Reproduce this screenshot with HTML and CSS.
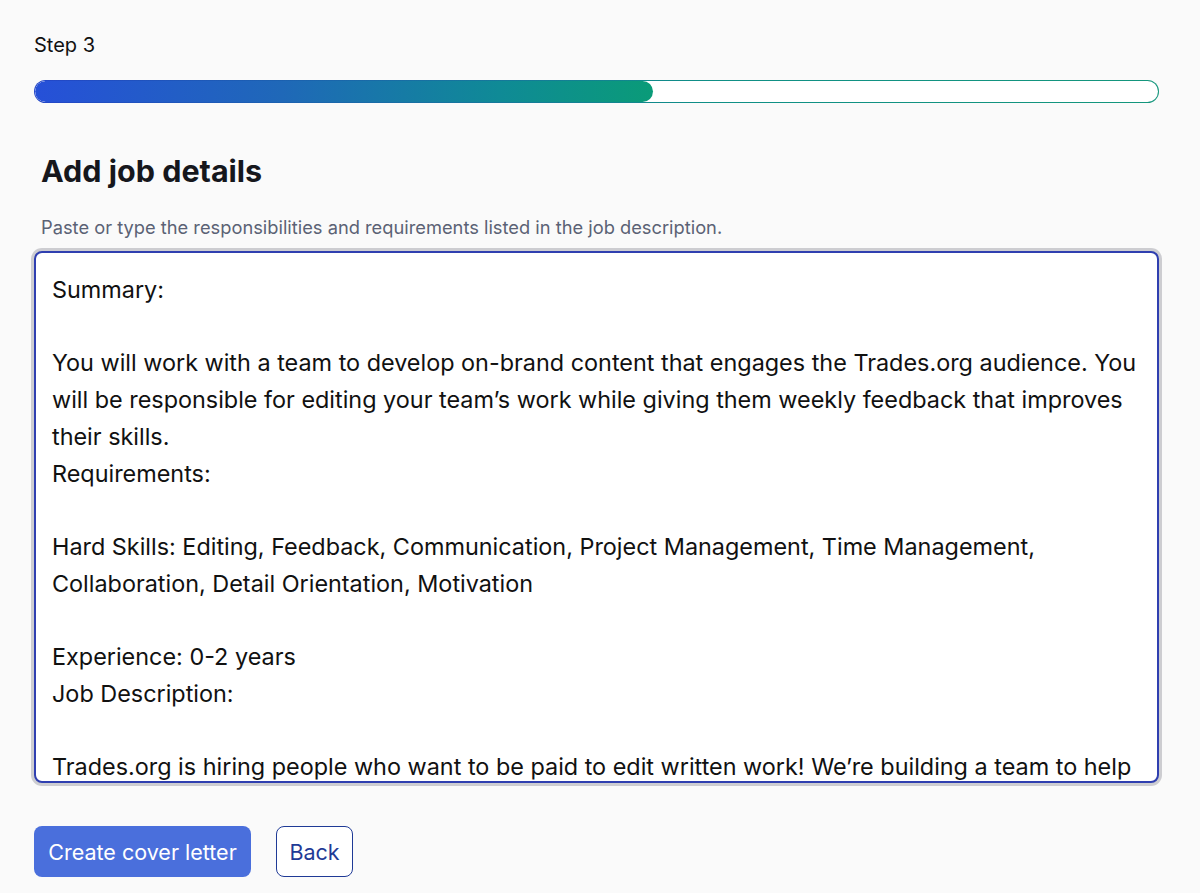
FILE: index.html
```html
<!DOCTYPE html>
<html lang="en">
<head>
<meta charset="utf-8">
<title>Add job details</title>
<link rel="stylesheet" href="styles.css">
</head>
<body>
<main class="page">
  <div class="step">Step 3</div>
  <div class="progress"><div class="progress-fill" style="width:55%"></div></div>
  <h1 class="title">Add job details</h1>
  <label class="hint" for="job">Paste or type the responsibilities and requirements listed in the job description.</label>
  <textarea id="job" class="job-input">Summary:

You will work with a team to develop on-brand content that engages the Trades.org audience. You will be responsible for editing your team’s work while giving them weekly feedback that improves their skills.
Requirements:

Hard Skills: Editing, Feedback, Communication, Project Management, Time Management, Collaboration, Detail Orientation, Motivation

Experience: 0-2 years
Job Description:

Trades.org is hiring people who want to be paid to edit written work! We’re building a team to help our writers produce their best work.</textarea>
  <div class="actions">
    <button class="btn btn-primary">Create cover letter</button>
    <button class="btn btn-secondary">Back</button>
  </div>
</main>
</body>
</html>
```

FILE: styles.css
```css
html, body {
  margin: 0;
  padding: 0;
  background: #fafafa;
}
body {
  font-family: Inter, "Noto Sans", sans-serif;
  color: #111;
}
.page {
  width: 1125px;
  padding: 33px 0 0 34px;
  display: flex;
  flex-direction: column;
}
.step {
  font-size: 20px;
  line-height: 24px;
  color: #111;
}
.progress {
  margin-top: 23px;
  height: 23px;
  box-sizing: border-box;
  border-radius: 12px;
  border: 1.5px solid transparent;
  background:
    linear-gradient(#ffffff, #ffffff) padding-box,
    linear-gradient(90deg, #2346c8, #0f8f86 60%, #14967c) border-box;
  overflow: hidden;
  display: flex;
}
.progress-fill {
  height: 100%;
  border-radius: 12px;
  background: linear-gradient(90deg, #2650d8 0%, #1f68b8 40%, #0f8a96 75%, #0a9b78 100%);
}
.title {
  margin: 50px 0 0 7px;
  font-size: 30.5px;
  line-height: 36px;
  font-weight: 700;
  color: #16171c;
}
.hint {
  margin: 26px 0 0 7px;
  font-size: 18.3px;
  line-height: 24px;
  color: #5b6275;
}
.job-input {
  margin-top: 12px;
  width: 1125px;
  height: 532px;
  box-sizing: border-box;
  padding: 19px 16px;
  border: 2px solid #2f3fb0;
  border-radius: 8px;
  box-shadow: 0 0 0 3px #cdcdd1;
  background: #fff;
  font-family: Inter, "Noto Sans", sans-serif;
  font-size: 23.4px;
  line-height: 36.7px;
  color: #111;
  resize: none;
  overflow: hidden;
  outline: none;
}
.actions {
  margin-top: 43px;
  display: flex;
  gap: 25px;
}
.btn {
  height: 51px;
  box-sizing: border-box;
  font-family: Inter, "Noto Sans", sans-serif;
  font-size: 21.5px;
  border-radius: 8px;
  cursor: pointer;
  padding: 0;
}
.btn-primary {
  width: 217px;
  background: #4a6fdc;
  color: #fff;
  border: none;
}
.btn-secondary {
  width: 77px;
  background: #fff;
  color: #1f3a96;
  border: 1px solid #1f3a96;
}
```
